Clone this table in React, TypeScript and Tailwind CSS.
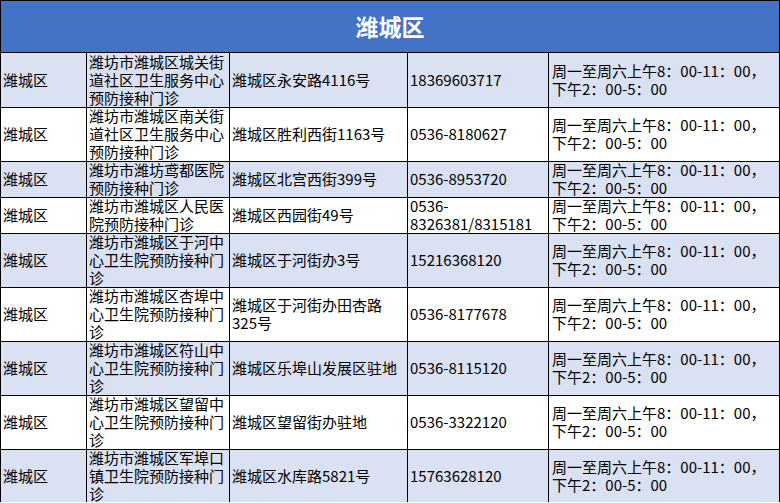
import React from "react";

type Row = {
  area: string;
  name: string[];
  addr: string[];
  phone: string[];
  tall: boolean;
};

const TIME = ["周一至周六上午8：00-11：00，", "下午2：00-5：00"];

const rows: Row[] = [
  { area: "潍城区", name: ["潍坊市潍城区城关街", "道社区卫生服务中心", "预防接种门诊"], addr: ["潍城区永安路4116号"], phone: ["18369603717"], tall: true },
  { area: "潍城区", name: ["潍坊市潍城区南关街", "道社区卫生服务中心", "预防接种门诊"], addr: ["潍城区胜利西街1163号"], phone: ["0536-8180627"], tall: true },
  { area: "潍城区", name: ["潍坊市潍坊鸢都医院", "预防接种门诊"], addr: ["潍城区北宫西街399号"], phone: ["0536-8953720"], tall: false },
  { area: "潍城区", name: ["潍坊市潍城区人民医", "院预防接种门诊"], addr: ["潍城区西园街49号"], phone: ["0536-", "8326381/8315181"], tall: false },
  { area: "潍城区", name: ["潍坊市潍城区于河中", "心卫生院预防接种门", "诊"], addr: ["潍城区于河街办3号"], phone: ["15216368120"], tall: true },
  { area: "潍城区", name: ["潍坊市潍城区杏埠中", "心卫生院预防接种门", "诊"], addr: ["潍城区于河街办田杏路", "325号"], phone: ["0536-8177678"], tall: true },
  { area: "潍城区", name: ["潍坊市潍城区符山中", "心卫生院预防接种门", "诊"], addr: ["潍城区乐埠山发展区驻地"], phone: ["0536-8115120"], tall: true },
  { area: "潍城区", name: ["潍坊市潍城区望留中", "心卫生院预防接种门", "诊"], addr: ["潍城区望留街办驻地"], phone: ["0536-3322120"], tall: true },
  { area: "潍城区", name: ["潍坊市潍城区军埠口", "镇卫生院预防接种门", "诊"], addr: ["潍城区水库路5821号"], phone: ["15763628120"], tall: true },
];

function Lines({ lines }: { lines: string[] }) {
  return (
    <p className="whitespace-nowrap leading-[18px]">
      {lines.map((l, i) => (
        <React.Fragment key={i}>
          {i > 0 && <br />}
          {l}
        </React.Fragment>
      ))}
    </p>
  );
}

export default function App() {
  return (
    <div className="w-[780px] bg-white font-['Noto_Sans_CJK_SC',sans-serif] text-[15px] text-black">
      <div className="border-t border-l border-black">
        <div className="flex h-[52px] items-center justify-center border-r border-b border-black bg-[#4472C4]">
          <span className="text-[23px] font-bold text-white leading-none">潍城区</span>
        </div>
        {rows.map((r, idx) => {
          const bg = idx % 2 === 0 ? "bg-[#D9E1F2]" : "bg-white";
          const last = idx === rows.length - 1;
          const h = r.tall ? (last ? "h-[53px]" : "h-[54px]") : "h-[36px]";
          return (
            <div
              key={idx}
              className={`grid grid-cols-[86px_143px_178px_141px_231px] ${h} ${bg}`}
            >
              <div className="flex items-center border-r border-b border-black pl-[2px]">
                <Lines lines={[r.area]} />
              </div>
              <div className="flex items-center border-r border-b border-black pl-[2px]">
                <Lines lines={r.name} />
              </div>
              <div className="flex items-center border-r border-b border-black pl-[2px]">
                <Lines lines={r.addr} />
              </div>
              <div className="flex items-center border-r border-b border-black pl-[2px]">
                <Lines lines={r.phone} />
              </div>
              <div className="flex items-center border-r border-b border-black pl-[3px]">
                <Lines lines={TIME} />
              </div>
            </div>
          );
        })}
      </div>
    </div>
  );
}
